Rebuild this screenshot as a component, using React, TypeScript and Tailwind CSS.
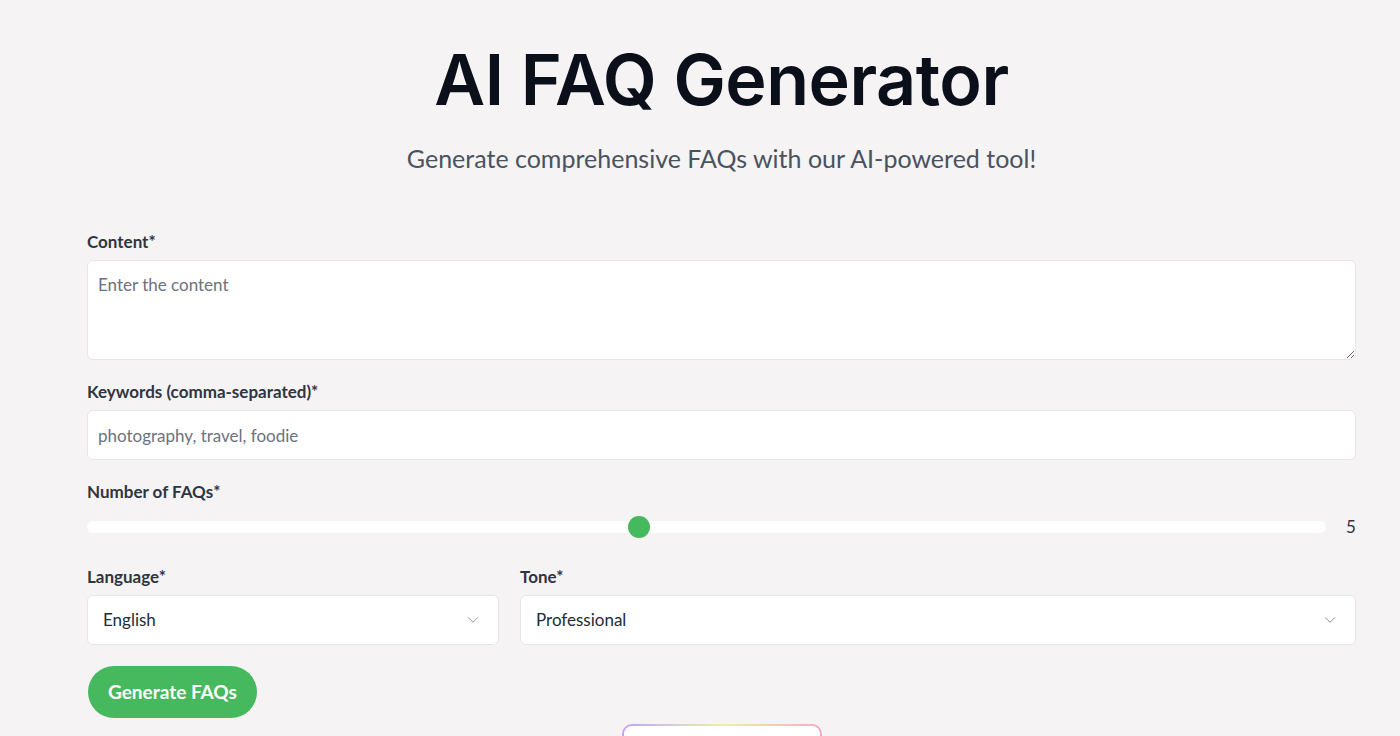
import { ChevronDown } from "lucide-react";
import { useState } from "react";

// ---------------------------------------------------------------------------
// Options
// ---------------------------------------------------------------------------

const LANGUAGES = ["English", "Spanish", "French", "German", "Italian", "Portuguese"];
const TONES = ["Professional", "Friendly", "Casual", "Formal", "Witty"];

const labelCls = "block text-[17px] font-bold text-[#2f3542] mb-[8px] leading-[20px]";
const fieldCls =
  "w-full bg-white border border-[#e6e6ea] rounded-[6px] text-[17px] text-[#1f2937] placeholder:text-[#6b7280] outline-none";

function Select({ value, options, onChange }: { value: string; options: string[]; onChange: (v: string) => void }) {
  return (
    <div className="relative">
      <select
        value={value}
        onChange={(e) => onChange(e.target.value)}
        className={`${fieldCls} appearance-none h-[50px] pl-[15px] pr-10 text-[#252b37]`}
      >
        {options.map((o) => (
          <option key={o}>{o}</option>
        ))}
      </select>
      <ChevronDown
        size={18}
        strokeWidth={1.3}
        className="pointer-events-none absolute right-[17px] top-1/2 -translate-y-1/2 text-[#8a8f99]"
      />
    </div>
  );
}

// ---------------------------------------------------------------------------
// Page
// ---------------------------------------------------------------------------

export default function App() {
  const [count, setCount] = useState(5);
  const [language, setLanguage] = useState("English");
  const [tone, setTone] = useState("Professional");

  const min = 1;
  const max = 10;
  const pct = (count - min) / (max - min);

  return (
    <div
      className="min-h-screen bg-[#f5f3f4] overflow-hidden"
      style={{ fontFamily: "Lato, 'Noto Sans', sans-serif" }}
    >
      <div className="ml-[87px] w-[1269px] pt-[38px]">
        {/* Header */}
        <h1
          className="text-center text-[70px] leading-[84px] font-semibold tracking-[-0.5px] text-[#0b0f1a]"
          style={{ fontFamily: "Inter, 'Noto Sans', sans-serif" }}
        >
          AI FAQ Generator
        </h1>
        <p className="text-center text-[25px] leading-[32px] text-[#4a5260] mt-[20px]">
          Generate comprehensive FAQs with our AI-powered tool!
        </p>

        {/* Form */}
        <form className="mt-[58px]" onSubmit={(e) => e.preventDefault()}>
          <label className={labelCls}>Content*</label>
          <textarea
            placeholder="Enter the content"
            className={`${fieldCls} h-[100px] px-[10px] py-[11px] resize-y block`}
          />

          <label className={`${labelCls} mt-[22px]`}>Keywords (comma-separated)*</label>
          <input
            placeholder="photography, travel, foodie"
            className={`${fieldCls} h-[50px] px-[10px] block`}
          />

          <label className={`${labelCls} mt-[22px]`}>Number of FAQs*</label>
          <div className="flex items-center gap-[20px] h-[34px]">
            <div className="relative flex-1 h-[12px] rounded-full bg-white">
              <div
                className="absolute top-1/2 -translate-y-1/2 w-[22px] h-[22px] rounded-full bg-[#46b85e]"
                style={{ left: `calc(${pct} * (100% - 22px))` }}
              />
            </div>
            <span className="w-[10px] text-[17px] text-[#2f3542]">{count}</span>
            <input
              type="range"
              min={min}
              max={max}
              value={count}
              onChange={(e) => setCount(Number(e.target.value))}
              className="hidden"
            />
          </div>

          <div className="grid grid-cols-[412px_1fr] gap-x-[21px] mt-[23px]">
            <div>
              <label className={labelCls}>Language*</label>
              <Select value={language} options={LANGUAGES} onChange={setLanguage} />
            </div>
            <div>
              <label className={labelCls}>Tone*</label>
              <Select value={tone} options={TONES} onChange={setTone} />
            </div>
          </div>

          <button
            type="submit"
            className="mt-[21px] ml-px h-[52px] px-[20px] rounded-full bg-[#46b85e] text-white text-[19px] font-bold"
          >
            Generate FAQs
          </button>
        </form>

        {/* Result card (rainbow border) */}
        <div className="flex justify-center mt-[6px]">
          <div className="w-[200px] h-[60px] rounded-[10px] p-[2px] bg-gradient-to-r from-[#c79cff] via-[#e8f59a] to-[#f7a8c4]">
            <div className="w-full h-full rounded-[8px] bg-white" />
          </div>
        </div>
      </div>
    </div>
  );
}
